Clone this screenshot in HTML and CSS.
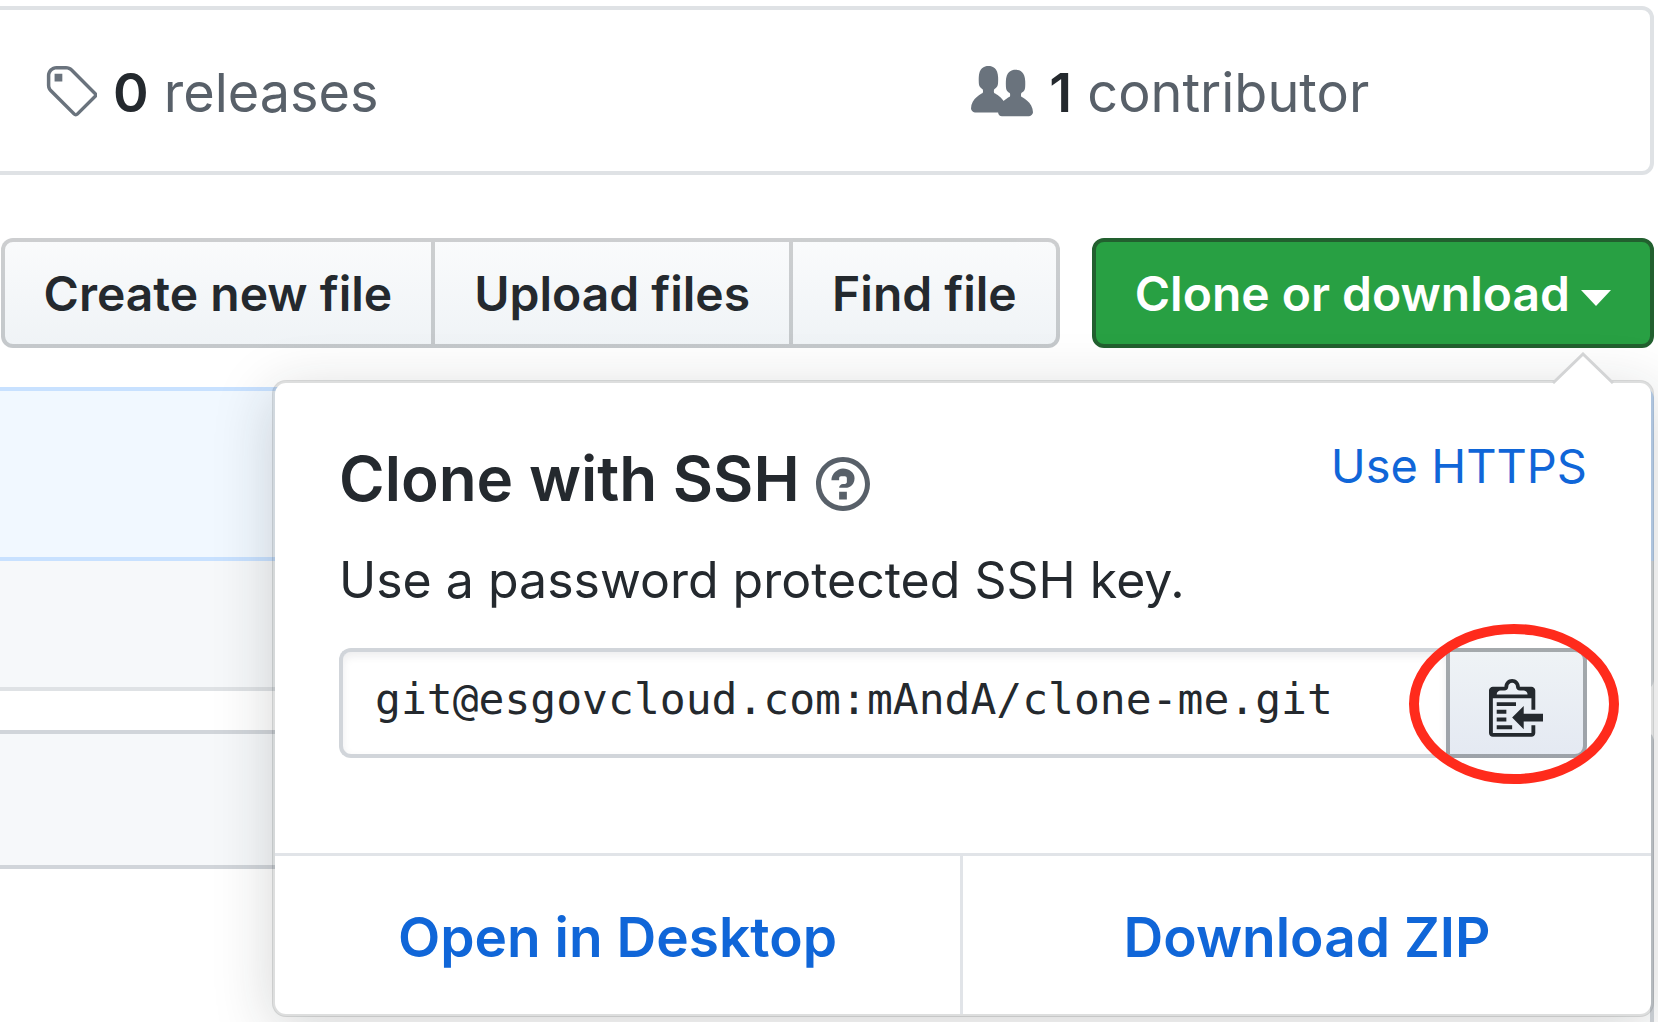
FILE: index.html
```html
<!DOCTYPE html>
<html lang="en">
<head>
<meta charset="utf-8">
<title>clone-me</title>
<link rel="stylesheet" href="styles.css">
</head>
<body>
<main class="repo">
  <ul class="summary">
    <li class="summary-item">
      <svg class="icon icon-14" viewBox="0 0 14 16" aria-hidden="true"><path d="M7.73 1.73C7.26 1.26 6.62 1 5.96 1H3.5C2.13 1 1 2.13 1 3.5v2.47c0 .66.27 1.3.73 1.77l6.06 6.06c.39.39 1.02.39 1.41 0l4.59-4.59a.996.996 0 000-1.41L7.73 1.73zM2.38 7.09c-.31-.3-.47-.7-.47-1.13V3.5c0-.88.72-1.59 1.59-1.59h2.47c.42 0 .83.16 1.13.47l6.14 6.13-4.73 4.73-6.13-6.15zM3.01 3h2v2H3V3h.01z"/></svg>
      <span><strong class="count">0</strong> releases</span>
    </li>
    <li class="summary-item">
      <svg class="icon icon-16" viewBox="0 0 16 16" aria-hidden="true"><path d="M16 12.999c0 .439-.45 1-1 1H7.995c-.539 0-.994-.447-.995-.999H1c-.54 0-1-.561-1-1 0-2.634 3-4 3-4s.229-.409 0-1c-.841-.621-1.058-.59-1-3 .058-2.419 1.367-3 2.5-3s2.442.58 2.5 3c.058 2.41-.159 2.379-1 3-.229.59 0 1 0 1s1.549.711 2.42 2.088C9.196 9.369 10 8.999 10 8.999s.229-.409 0-1c-.841-.62-1.058-.59-1-3 .058-2.419 1.367-3 2.5-3s2.437.581 2.495 3c.059 2.41-.158 2.38-1 3-.229.59 0 1 0 1s3.005 1.366 3.005 4"/></svg>
      <span><strong class="count">1</strong> contributor</span>
    </li>
  </ul>

  <div class="toolbar">
    <div class="btn-group">
      <button class="btn" type="button">Create new file</button>
      <button class="btn" type="button">Upload files</button>
      <button class="btn" type="button">Find file</button>
    </div>
    <div class="clone">
      <button class="btn btn-primary" type="button" aria-expanded="true">Clone or download<span class="caret"></span></button>
      <section class="popover" aria-labelledby="clone-title">
        <svg class="pointer" viewBox="0 0 62 32" aria-hidden="true"><path class="pointer-fill" d="M1 32 31 2 61 32z"/><path class="pointer-edge" d="M1 31 31 2 61 31"/></svg>
        <div class="popover-body">
          <div class="popover-head">
            <h2 class="popover-title" id="clone-title">Clone with SSH
              <a class="help" href="#help" aria-label="Which remote URL should I use?"><svg class="icon icon-14" viewBox="0 0 14 16" aria-hidden="true"><path d="M6 10h2v2H6v-2zm4-3.5C10 8.64 8 9 8 9H6c0-.55.45-1 1-1h.5c.28 0 .5-.22.5-.5v-1c0-.28-.22-.5-.5-.5h-1c-.28 0-.5.22-.5.5V7H4c0-1.5 1.5-3 3-3s3 1 3 2.5zM7 2.3c3.14 0 5.7 2.56 5.7 5.7s-2.56 5.7-5.7 5.7A5.71 5.71 0 011.3 8c0-3.14 2.56-5.7 5.7-5.7zM7 1C3.14 1 0 4.14 0 8s3.14 7 7 7 7-3.14 7-7-3.14-7-7-7z"/></svg></a>
            </h2>
            <a class="switch" href="#https">Use HTTPS</a>
          </div>
          <p class="hint">Use a password protected SSH key.</p>
          <div class="url-group">
            <input class="url" type="text" readonly aria-label="Clone this repository" value="git@esgovcloud.com:mAndA/clone-me.git">
            <button class="copy" type="button" aria-label="Copy to clipboard">
              <svg class="icon icon-14" viewBox="0 0 14 16" aria-hidden="true"><path d="M2 13h4v1H2v-1zm5-6H2v1h5V7zm2 3V8l-3 3 3 3v-2h5v-2H9zM4.5 9H2v1h2.5V9zM2 12h2.5v-1H2v1zm9 1h1v2c-.02.28-.11.52-.3.7-.19.18-.42.28-.7.3H1c-.55 0-1-.45-1-1V4c0-.55.45-1 1-1h3c0-1.11.89-2 2-2 1.11 0 2 .89 2 2h3c.55 0 1 .45 1 1v5h-1V6H1v9h10v-2zM2 5h8c0-.55-.45-1-1-1H8c-.55 0-1-.45-1-1s-.45-1-1-1-1 .45-1 1-.45 1-1 1H3c-.55 0-1 .45-1 1z"/></svg>
              <span class="highlight"></span>
            </button>
          </div>
        </div>
        <div class="popover-foot">
          <a class="action" href="#desktop">Open in Desktop</a>
          <a class="action" href="#zip">Download ZIP</a>
        </div>
      </section>
    </div>
  </div>

  <div class="commit"></div>
  <div class="files-head"></div>
  <div class="readme">
    <div class="readme-head"></div>
  </div>
</main>
</body>
</html>
```

FILE: styles.css
```css
*,
*::before,
*::after {
  box-sizing: border-box;
}

body {
  margin: 0;
  overflow-x: hidden;
  background: #fff;
  color: #24292e;
  font-family: Inter, "Liberation Sans", sans-serif;
}

a {
  color: #1066d8;
  text-decoration: none;
}

.icon {
  display: block;
  flex: none;
  height: 62px;
  fill: currentColor;
}

.icon-14 {
  width: 54px;
}

.icon-16 {
  width: 62px;
}

.repo {
  display: flex;
  flex-direction: column;
  min-height: 100vh;
  margin: 0 4px 0 -273px;
  padding-top: 6px;
}

.summary {
  display: grid;
  grid-template-columns: 1fr 1fr;
  margin: 0 0 63px;
  padding: 0;
  border: 4px solid #dfe2e5;
  border-radius: 12px;
  list-style: none;
}

.summary-item {
  display: flex;
  align-items: center;
  justify-content: center;
  gap: 16px;
  height: 161px;
  padding-top: 4px;
  color: #586069;
  font-size: 54px;
}

.summary-item .icon {
  color: #6a737d;
}

.count {
  color: #24292e;
  font-weight: 600;
}

.toolbar {
  display: flex;
  justify-content: flex-end;
  gap: 32px;
  margin-bottom: 39px;
}

.btn-group {
  display: flex;
}

.btn {
  height: 110px;
  padding: 2px 39px 0;
  border: 4px solid rgba(27, 31, 35, 0.2);
  background: #eff3f6 linear-gradient(#fafbfc, #eff3f6) border-box;
  color: #24292e;
  font: 600 48px/70px Inter, "Liberation Sans", sans-serif;
  white-space: nowrap;
}

.btn-group .btn + .btn {
  border-left: 0;
}

.btn-group .btn:first-child {
  border-radius: 12px 0 0 12px;
}

.btn-group .btn:last-child {
  border-radius: 0 12px 12px 0;
}

.btn-primary {
  border-color: #22602f;
  border-radius: 12px;
  background: #28a043;
  color: #fff;
}

.caret {
  display: inline-block;
  margin-left: 11px;
  border: 15px solid transparent;
  border-top: 16px solid #fff;
  border-bottom: 0;
  vertical-align: 5px;
}

.clone {
  position: relative;
}

.popover {
  position: absolute;
  z-index: 1;
  top: 142px;
  right: 0;
  width: 1382px;
  max-width: calc(100vw - 8px);
  border: 3px solid rgba(27, 31, 35, 0.15);
  border-radius: 14px;
  background: #fff padding-box;
  box-shadow: 0 12px 60px rgba(27, 31, 35, 0.18);
}

.pointer {
  position: absolute;
  top: -31px;
  right: 37px;
  width: 62px;
  height: 32px;
}

.pointer-fill {
  fill: #fff;
}

.pointer-edge {
  fill: none;
  stroke: #d3d4d5;
  stroke-width: 3px;
}

.popover-body {
  padding: 60px 64px 95px;
}

.popover-head {
  display: flex;
  align-items: flex-start;
  justify-content: space-between;
}

.popover-title {
  display: flex;
  align-items: center;
  gap: 16px;
  height: 72px;
  margin: 0;
  font-size: 62px;
  font-weight: 600;
  line-height: 72px;
}

.help {
  padding-top: 10px;
  color: #586069;
}

.switch {
  font-size: 47px;
  line-height: 46px;
}

.hint {
  margin: 25px 0 28px;
  font-size: 50px;
  line-height: 80px;
}

.url-group {
  display: flex;
}

.url {
  flex: 1;
  min-width: 0;
  height: 110px;
  padding: 0 32px 8px;
  border: 4px solid #d1d5da;
  border-right: 0;
  border-radius: 12px 0 0 12px;
  outline: 0;
  background: #fff;
  box-shadow: inset 0 4px 8px rgba(27, 31, 35, 0.08);
  color: #24292e;
  font: 43px "DejaVu Sans Mono", monospace;
}

.copy {
  position: relative;
  display: flex;
  align-items: center;
  justify-content: center;
  width: 141px;
  height: 110px;
  padding: 6px 2px 0 0;
  border: 4px solid rgba(27, 31, 35, 0.35);
  border-radius: 0 12px 12px 0;
  background: linear-gradient(#eff3f6, #e4e9f2) border-box;
  color: #24292e;
}

.highlight {
  position: absolute;
  inset: -28px -36px -30px -41px;
  border: 10px solid #ff2b1c;
  border-radius: 50%;
}

.popover-foot {
  display: grid;
  grid-template-columns: 1fr 1fr;
  border-top: 3px solid #e1e4e8;
}

.action {
  padding: 41px 0 37px;
  font-size: 55px;
  font-weight: 600;
  line-height: 80px;
  text-align: center;
}

.action:first-child {
  border-right: 3px solid #e1e4e8;
}

.commit {
  height: 174px;
  border: 4px solid #c8e1ff;
  border-radius: 12px 12px 0 0;
  background: #f1f8ff;
}

.files-head {
  height: 130px;
  border: 4px solid #dfe2e5;
  border-top: 0;
  border-radius: 0 0 12px 12px;
  background: #f6f8fa;
}

.readme {
  flex: 1;
  margin-top: 39px;
  border: 4px solid #d1d5da;
  border-bottom: 0;
  border-radius: 12px 12px 0 0;
}

.readme-head {
  height: 135px;
  border-bottom: 4px solid #d1d5da;
  border-radius: 8px 8px 0 0;
  background: #f6f8fa;
}
```
